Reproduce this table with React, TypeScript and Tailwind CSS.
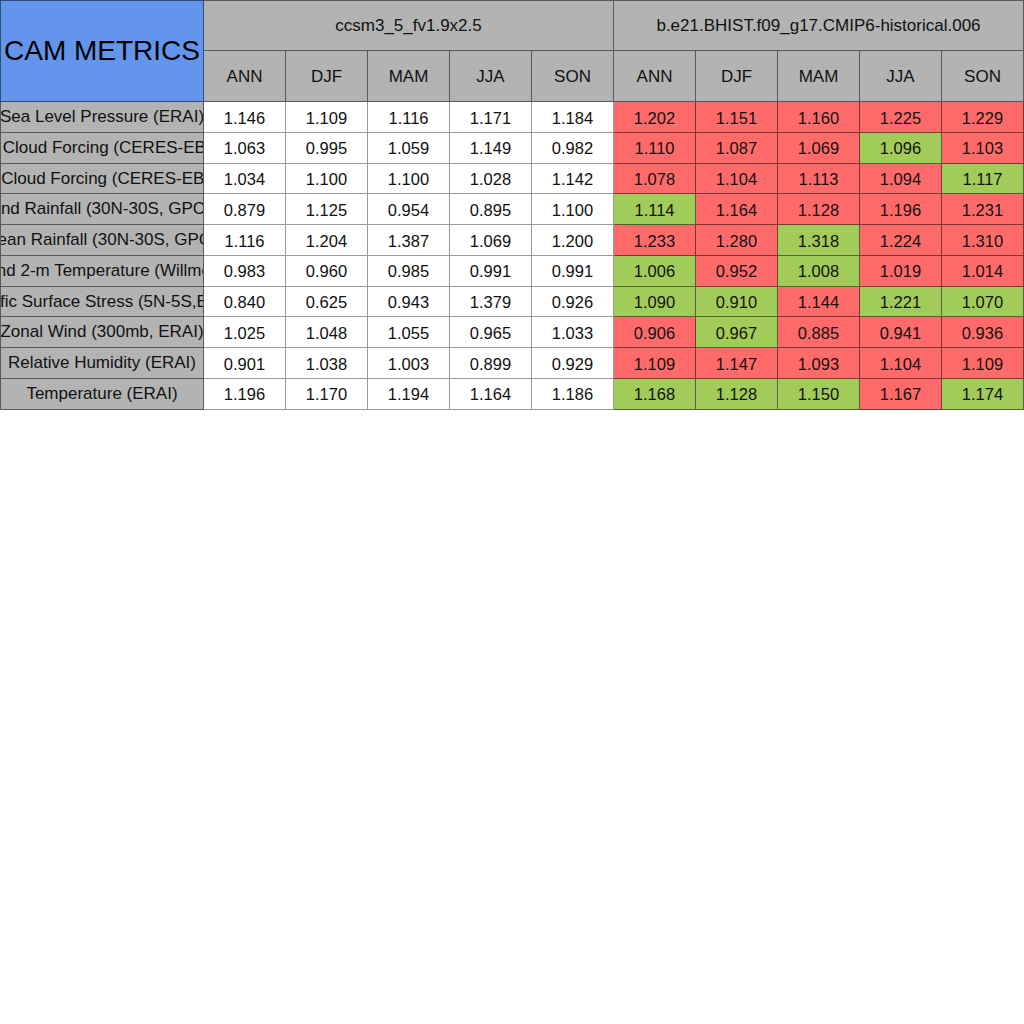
import React from "react";

const labels = [
  "Sea Level Pressure (ERAI)",
  "SW Cloud Forcing (CERES-EBAF)",
  "LW Cloud Forcing (CERES-EBAF)",
  "Land Rainfall (30N-30S, GPCP)",
  "Ocean Rainfall (30N-30S, GPCP)",
  "Land 2-m Temperature (Willmott)",
  "Pacific Surface Stress (5N-5S,ERS)",
  "Zonal Wind (300mb, ERAI)",
  "Relative Humidity (ERAI)",
  "Temperature (ERAI)",
];

const a = [
  ["1.146", "1.109", "1.116", "1.171", "1.184"],
  ["1.063", "0.995", "1.059", "1.149", "0.982"],
  ["1.034", "1.100", "1.100", "1.028", "1.142"],
  ["0.879", "1.125", "0.954", "0.895", "1.100"],
  ["1.116", "1.204", "1.387", "1.069", "1.200"],
  ["0.983", "0.960", "0.985", "0.991", "0.991"],
  ["0.840", "0.625", "0.943", "1.379", "0.926"],
  ["1.025", "1.048", "1.055", "0.965", "1.033"],
  ["0.901", "1.038", "1.003", "0.899", "0.929"],
  ["1.196", "1.170", "1.194", "1.164", "1.186"],
];

const b = [
  ["1.202", "1.151", "1.160", "1.225", "1.229"],
  ["1.110", "1.087", "1.069", "1.096", "1.103"],
  ["1.078", "1.104", "1.113", "1.094", "1.117"],
  ["1.114", "1.164", "1.128", "1.196", "1.231"],
  ["1.233", "1.280", "1.318", "1.224", "1.310"],
  ["1.006", "0.952", "1.008", "1.019", "1.014"],
  ["1.090", "0.910", "1.144", "1.221", "1.070"],
  ["0.906", "0.967", "0.885", "0.941", "0.936"],
  ["1.109", "1.147", "1.093", "1.104", "1.109"],
  ["1.168", "1.128", "1.150", "1.167", "1.174"],
];

const g = [
  [0, 0, 0, 0, 0],
  [0, 0, 0, 1, 0],
  [0, 0, 0, 0, 1],
  [1, 0, 0, 0, 0],
  [0, 0, 1, 0, 0],
  [1, 0, 1, 0, 0],
  [1, 1, 0, 1, 1],
  [0, 1, 0, 0, 0],
  [0, 0, 0, 0, 0],
  [1, 1, 1, 0, 1],
];

const seasons = ["ANN", "DJF", "MAM", "JJA", "SON"];

export default function App() {
  return (
    <div
      className="w-[1024px] h-[1024px] bg-white text-[16.5px] text-[#111]"
      style={{ fontFamily: '"Liberation Sans", Arial, sans-serif' }}
    >
      <div className="grid grid-cols-[204px_repeat(10,82px)] grid-rows-[51px_51px_repeat(10,30.75px)]">
        <div className="row-span-2 flex items-center justify-center overflow-hidden whitespace-nowrap border-l border-t border-r border-b border-black/50 bg-[#6495ed] text-[28px] text-black">
          CAM METRICS
        </div>
        <div className="col-span-5 flex items-center justify-center border-t border-r border-b border-black/50 bg-[#b3b3b3] text-[17px]">
          ccsm3_5_fv1.9x2.5
        </div>
        <div className="col-span-5 flex items-center justify-center border-t border-r border-b border-black/50 bg-[#b3b3b3] text-[17px]">
          b.e21.BHIST.f09_g17.CMIP6-historical.006
        </div>
        {[0, 1].map((k) =>
          seasons.map((s) => (
            <div
              key={k + s}
              className="flex items-center justify-center border-r border-b border-black/50 bg-[#b3b3b3] pt-[2px] text-[17px]"
            >
              {s}
            </div>
          ))
        )}
        {labels.map((l, i) => (
          <React.Fragment key={l}>
            <div className="flex items-center justify-center overflow-hidden whitespace-nowrap border-l border-r border-b border-black/50 bg-[#b3b3b3] text-[17px]">
              <span className="shrink-0">{l}</span>
            </div>
            {a[i].map((v, j) => (
              <div
                key={"a" + j}
                className="flex items-center justify-center border-r border-b border-black/40 bg-white pt-[2px]"
              >
                {v}
              </div>
            ))}
            {b[i].map((v, j) => (
              <div
                key={"b" + j}
                className={
                  "flex items-center justify-center border-r border-b border-black/50 pt-[2px] " +
                  (g[i][j] ? "bg-[#a2cc5a]" : "bg-[#ff6b6b]")
                }
              >
                {v}
              </div>
            ))}
          </React.Fragment>
        ))}
      </div>
    </div>
  );
}
